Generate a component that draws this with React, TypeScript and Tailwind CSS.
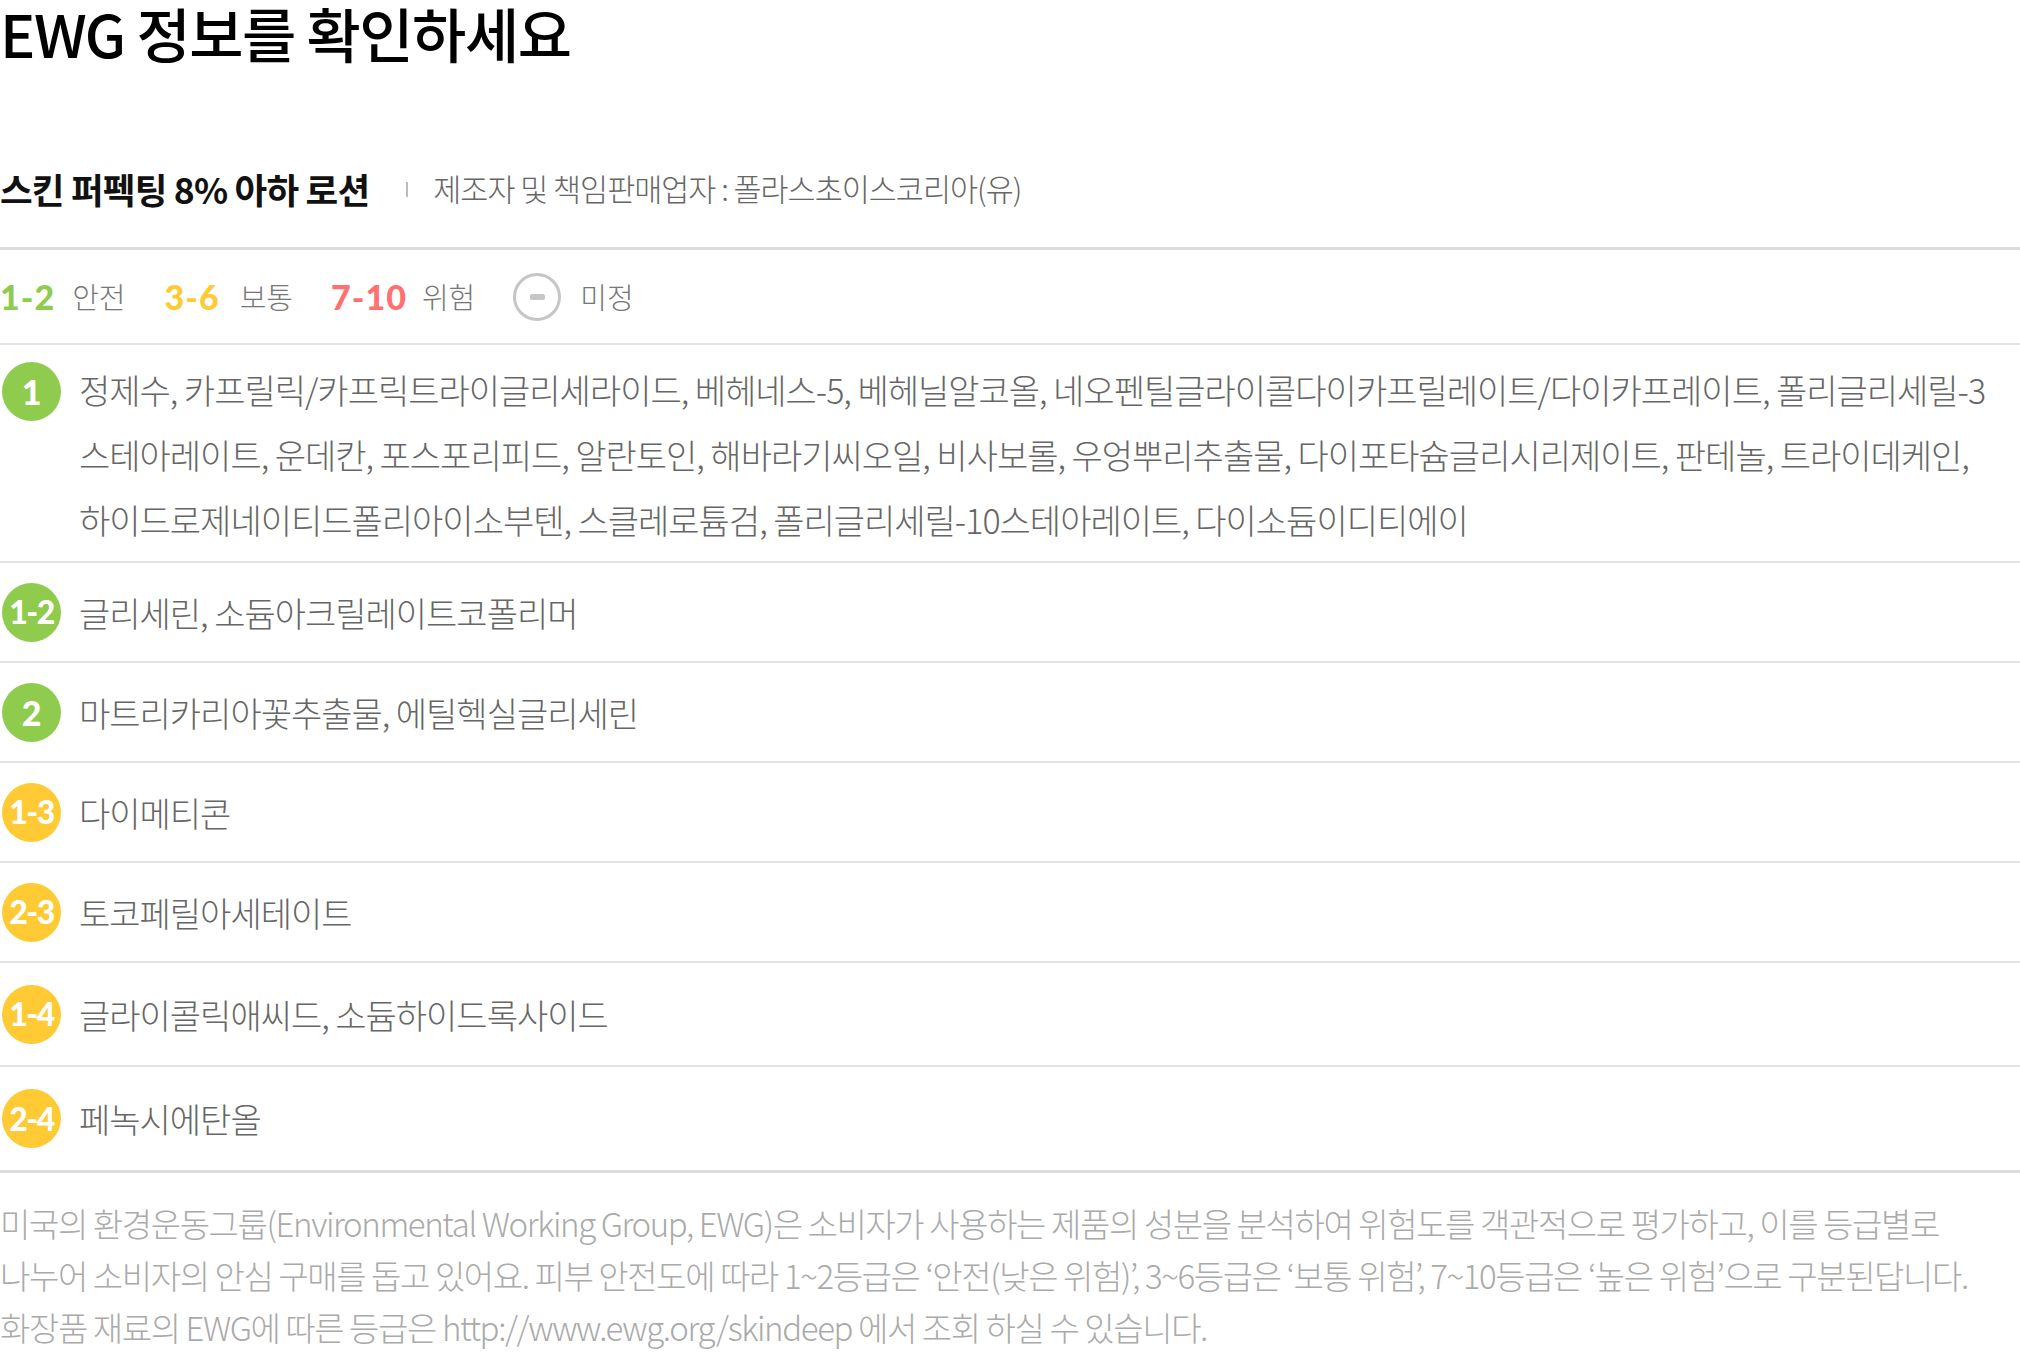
import React from "react";

type Row = { grade: string; color: "green" | "yellow"; names: string; tall?: boolean };

const rows: Row[] = [
  { grade: "1-2", color: "green", names: "글리세린, 소듐아크릴레이트코폴리머" },
  { grade: "2", color: "green", names: "마트리카리아꽃추출물, 에틸헥실글리세린" },
  { grade: "1-3", color: "yellow", names: "다이메티콘" },
  { grade: "2-3", color: "yellow", names: "토코페릴아세테이트" },
  { grade: "1-4", color: "yellow", names: "글라이콜릭애씨드, 소듐하이드록사이드", tall: true },
  { grade: "2-4", color: "yellow", names: "페녹시에탄올", tall: true },
];

const Badge: React.FC<{ grade: string; color: "green" | "yellow" }> = ({ grade, color }) => (
  <div
    className={
      "flex h-[59px] w-[59px] shrink-0 items-center justify-center rounded-full font-['Lato',sans-serif] font-black text-white " +
      (grade.length > 1 ? "text-[32px] tracking-[-1.5px]" : "text-[34px]") +
      " " +
      (color === "green" ? "bg-[#8fcc4e]" : "bg-[#ffca34]")
    }
  >
    {grade}
  </div>
);

export default function App() {
  return (
    <div className="w-[2020px] bg-white font-['Noto_Sans_CJK_KR',sans-serif]">
      {/* 제목 */}
      <h1 className="h-[66px] pt-[1px] text-[59px] leading-[64px] font-medium tracking-[-1.5px] text-black">
        EWG 정보를 확인하세요
      </h1>

      {/* 제품명 */}
      <div className="mt-[103px] flex h-[40px] items-center">
        <span className="text-[35.5px] font-bold tracking-[-0.8px] text-[#111]">스킨 퍼펙팅 8% 아하 로션</span>
        <span className="ml-[37px] h-[15px] w-[2px] bg-[#bbb]" />
        <span className="ml-[25px] text-[30.5px] font-light tracking-[-1px] text-[#666]">
          제조자 및 책임판매업자 : 폴라스초이스코리아(유)
        </span>
      </div>
      <div className="mt-[38px] h-[3px] bg-[#dcdcdc]" />

      {/* 범례 */}
      <div className="flex h-[95px] items-center border-b-2 border-[#e3e3e3]">
        <span className="font-['Lato',sans-serif] text-[34px] font-black tracking-[1px] text-[#8fcc4e]">1-2</span>
        <span className="ml-[17px] text-[29px] font-light text-[#777]">안전</span>
        <span className="ml-[39px] font-['Lato',sans-serif] text-[34px] font-black tracking-[1px] text-[#ffca34]">3-6</span>
        <span className="ml-[20px] text-[29px] font-light text-[#777]">보통</span>
        <span className="ml-[38px] font-['Lato',sans-serif] text-[34px] font-black tracking-[1px] text-[#ff7171]">7-10</span>
        <span className="ml-[15px] text-[29px] font-light text-[#777]">위험</span>
        <span className="ml-[38px] flex h-[48px] w-[48px] items-center justify-center rounded-full border-[3px] border-[#c6c6c6]">
          <span className="h-[6px] w-[15px] rounded-[2px] bg-[#c6c6c6]" />
        </span>
        <span className="ml-[19px] text-[29px] font-light text-[#777]">미정</span>
      </div>

      {/* 성분 1등급 */}
      <div className="flex items-start border-b-2 border-[#e3e3e3] pt-[12px] pb-[9px]">
        <div className="mt-[5px] ml-[2px]">
          <Badge grade="1" color="green" />
        </div>
        <p className="ml-[18px] text-[34px] leading-[65px] font-light tracking-[-1px] whitespace-nowrap text-[#666]">
          정제수, 카프릴릭/카프릭트라이글리세라이드, 베헤네스-5, 베헤닐알코올, 네오펜틸글라이콜다이카프릴레이트/다이카프레이트, 폴리글리세릴-3
          <br />
          스테아레이트, 운데칸, 포스포리피드, 알란토인, 해바라기씨오일, 비사보롤, 우엉뿌리추출물, 다이포타슘글리시리제이트, 판테놀, 트라이데케인,
          <br />
          하이드로제네이티드폴리아이소부텐, 스클레로튬검, 폴리글리세릴-10스테아레이트, 다이소듐이디티에이
        </p>
      </div>

      {rows.map((r, i) => (
        <div
          key={r.grade}
          className={
            "flex items-center " +
            (i === rows.length - 1
              ? "h-[106px] border-b-[3px] border-[#dcdcdc]"
              : r.tall
                ? "h-[104px] border-b-2 border-[#e3e3e3]"
                : "h-[100px] border-b-2 border-[#e3e3e3]")
          }
        >
          <div className="ml-[2px]">
            <Badge grade={r.grade} color={r.color} />
          </div>
          <p className="ml-[18px] text-[34px] font-light tracking-[-1px] text-[#666]">{r.names}</p>
        </div>
      ))}

      {/* 안내문 */}
      <p className="pt-[24px] text-[33px] leading-[52px] font-light tracking-[-1.4px] whitespace-nowrap text-[#aaa]">
        미국의 환경운동그룹(Environmental Working Group, EWG)은 소비자가 사용하는 제품의 성분을 분석하여 위험도를 객관적으로 평가하고, 이를 등급별로
        <br />
        나누어 소비자의 안심 구매를 돕고 있어요. 피부 안전도에 따라 1~2등급은 ‘안전(낮은 위험)’, 3~6등급은 ‘보통 위험’, 7~10등급은 ‘높은 위험’으로 구분된답니다.
        <br />
        화장품 재료의 EWG에 따른 등급은 http://www.ewg.org/skindeep 에서 조회 하실 수 있습니다.
      </p>
    </div>
  );
}
